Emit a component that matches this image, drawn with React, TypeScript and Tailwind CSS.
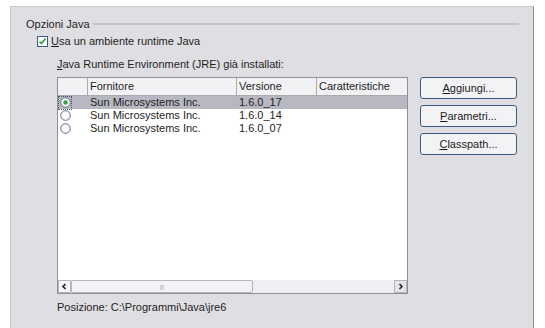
import React from 'react';

type Jre = { vendor: string; version: string; selected?: boolean };

const jres: Jre[] = [
  { vendor: 'Sun Microsystems Inc.', version: '1.6.0_17', selected: true },
  { vendor: 'Sun Microsystems Inc.', version: '1.6.0_14' },
  { vendor: 'Sun Microsystems Inc.', version: '1.6.0_07' },
];

function Radio({ checked }: { checked?: boolean }) {
  return (
    <svg width="11" height="11" viewBox="0 0 11 11">
      <circle cx="5.5" cy="5.5" r="4.8" fill="#fbfbfd" stroke="#5a6f88" strokeWidth="1" />
      {checked && <circle cx="5.5" cy="5.5" r="2.3" fill="#2fa83a" />}
    </svg>
  );
}

function Arrow({ left }: { left?: boolean }) {
  return (
    <svg width="7" height="7" viewBox="0 0 7 7">
      <path d={left ? 'M4.5 1 L2 3.5 L4.5 6' : 'M2.5 1 L5 3.5 L2.5 6'} fill="none" stroke="#222" strokeWidth="1.6" />
    </svg>
  );
}

function Button({ label }: { label: string }) {
  return (
    <button className="flex h-[22px] w-[97px] items-center justify-center rounded-[3px] border border-[#3c5a7e] bg-[#f3f3f6] text-[11px] leading-[13px] text-[#1b1b1b]">
      <span className="underline">{label[0]}</span>
      {label.slice(1)}
    </button>
  );
}

export default function App() {
  return (
    <div className="h-[328px] w-[545px] overflow-hidden bg-white pl-[10px] pt-[6px] text-[11px] leading-[13px] text-[#1e1e1e]" style={{ fontFamily: '"Liberation Sans", Arial, sans-serif' }}>
      <div className="h-[330px] w-[524px] border-l border-t border-r border-l-[#c8c8cc] border-t-[#c8c8cc] border-r-[#8c8c90] bg-[#dfdfe3] pl-[15px] pt-[10px]">
        {/* Group title */}
        <div className="flex h-[14px] items-center gap-[3px] pr-[14px]">
          <span>Opzioni Java</span>
          <div className="h-[2px] flex-1 bg-[#c4c4c8]" />
        </div>
        {/* Checkbox */}
        <div className="mt-[4px] flex h-[12px] items-center gap-[3px] pl-[11px]">
          <div className="flex h-[11px] w-[11px] items-center justify-center border border-[#3a5a80] bg-white">
            <svg width="9" height="9" viewBox="0 0 9 9">
              <path d="M1.5 4.5 L3.5 6.5 L7.5 1.5" fill="none" stroke="#21a03a" strokeWidth="1.6" />
            </svg>
          </div>
          <span>
            <span className="underline">U</span>sa un ambiente runtime Java
          </span>
        </div>
        <div className="mt-[11px] h-[13px] pl-[31px]">
          <span className="underline">J</span>ava Runtime Environment (JRE) già installati:
        </div>
        <div className="mt-[6px] flex gap-[12px] pl-[31px]">
          {/* Table */}
          <div className="flex h-[217px] w-[351px] flex-col border border-[#8f8f94] bg-white">
            <div className="flex h-[18px] border-b border-[#a9a9ae] bg-[#f2f2f4]">
              <div className="w-[30px] border-r border-[#a9a9ae]" />
              <div className="flex w-[149px] items-center border-r border-[#a9a9ae] pl-[2px]">Fornitore</div>
              <div className="flex w-[80px] items-center border-r border-[#a9a9ae] pl-[2px]">Versione</div>
              <div className="flex flex-1 items-center pl-[2px]">Caratteristiche</div>
            </div>
            <div className="flex-1">
              {jres.map((j, i) => (
                <div key={i} className={`flex h-[13px] items-center ${j.selected ? 'bg-[#b7b8c1]' : ''}`}>
                  <div className="flex w-[30px] items-center pl-[1px]">
                    <div className={`flex h-[12px] w-[12px] items-center justify-center ${j.selected ? 'outline outline-1 outline-dotted outline-[#555]' : ''}`}>
                      <Radio checked={j.selected} />
                    </div>
                  </div>
                  <div className="w-[149px] pl-[2px]">{j.vendor}</div>
                  <div className="w-[80px] pl-[2px]">{j.version}</div>
                </div>
              ))}
            </div>
            {/* Scrollbar */}
            <div className="flex h-[13px] bg-[#eeeef3]">
              <div className="flex w-[13px] items-center justify-center border border-[#b5b5bb] bg-[#f6f6f8]">
                <Arrow left />
              </div>
              <div className="flex w-[182px] items-center justify-center rounded-[2px] border border-[#b5b5bb] bg-[#f3f3f6]">
                <span className="text-[6px] leading-none text-[#999]">|||</span>
              </div>
              <div className="flex-1" />
              <div className="flex w-[13px] items-center justify-center border border-[#b5b5bb] bg-[#e4e4ea]">
                <Arrow />
              </div>
            </div>
          </div>
          {/* Buttons */}
          <div className="flex flex-col gap-[6px]">
            <Button label="Aggiungi..." />
            <Button label="Parametri..." />
            <Button label="Classpath..." />
          </div>
        </div>
        <div className="mt-[7px] h-[13px] pl-[31px]">Posizione: C:\Programmi\Java\jre6</div>
      </div>
    </div>
  );
}
